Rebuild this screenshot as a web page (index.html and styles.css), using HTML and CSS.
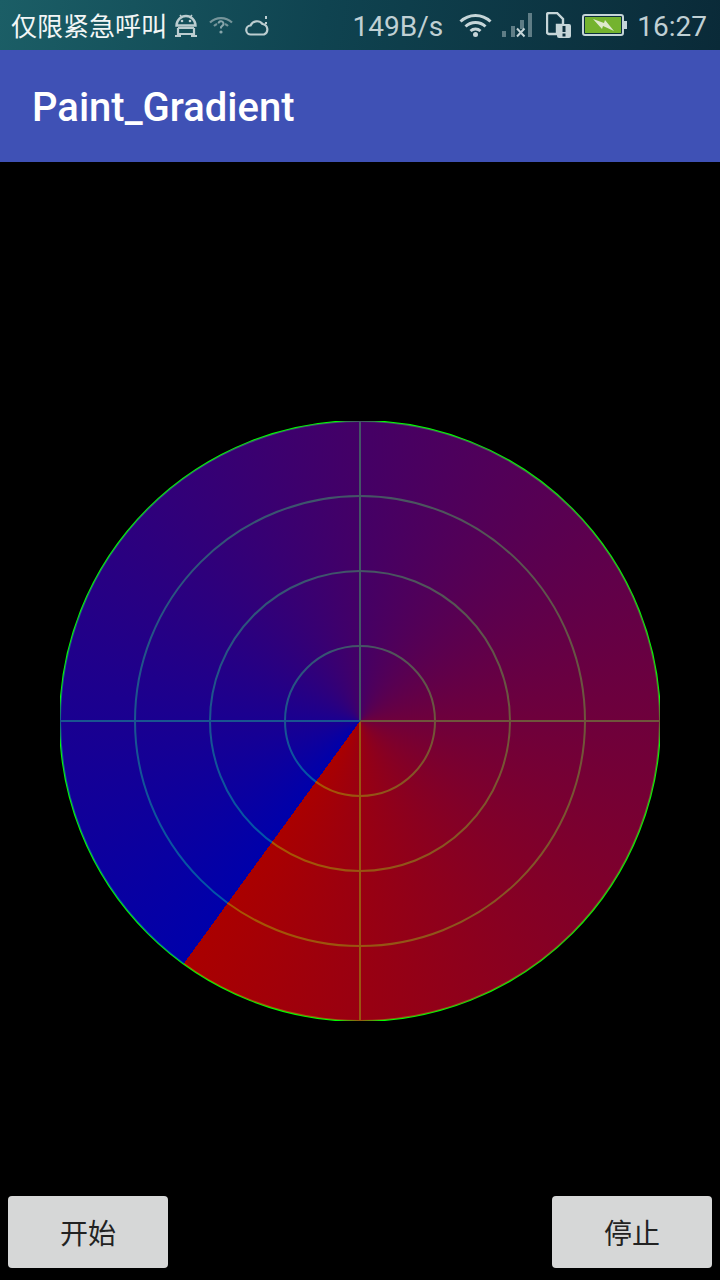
FILE: index.html
```html
<!DOCTYPE html>
<html lang="zh">
<head>
    <meta charset="utf-8">
    <title>Paint_Gradient</title>
    <link rel="stylesheet" href="styles.css">
</head>
<body>
    <div class="status-bar">
        <span class="carrier">仅限紧急呼叫</span>
        <svg class="icon icon-android" width="24" height="23" viewBox="0 0 24 23">
            <path d="M2.500 11.500a9.500 9.500 0 0 1 19 0z" fill="none" stroke="#bccdd0" stroke-width="2.400"/>
            <path d="M6 1l2.500 3M18 1l-2.500 3" stroke="#bccdd0" stroke-width="1.500"/>
            <circle cx="8" cy="7" r="1.300" fill="#bccdd0"/>
            <circle cx="16" cy="7" r="1.300" fill="#bccdd0"/>
            <path d="M4 14h16M4 14v8M20 14v8M1 22h6M17 22h6M4 20h16" fill="none" stroke="#bccdd0" stroke-width="2.200"/>
        </svg>
        <svg class="icon icon-wifi-off" width="24" height="17" viewBox="0 0 24 17">
            <path d="M1 5.500a16 16 0 0 1 22 0M5 9a10 10 0 0 1 3-2M19 9a10 10 0 0 0-3-2" fill="none" stroke="#8fa8ac" stroke-width="2.200"/>
            <path d="M9.500 6.500a2.500 2.500 0 1 1 3.500 2.500l-1 1.200v1.300" fill="none" stroke="#a5bcc0" stroke-width="2"/>
            <circle cx="12" cy="15" r="1.600" fill="#a5bcc0"/>
        </svg>
        <svg class="icon icon-cloud" width="24" height="21" viewBox="0 0 24 21">
            <path d="M6 19.500a4.500 4.500 0 0 1-.5-9 7 7 0 0 1 12-1.500 5.500 5.500 0 0 1 1.500 10.500z" fill="none" stroke="#bccdd0" stroke-width="2.200"/>
            <path d="M21 1v3M21 7v2" stroke="#bccdd0" stroke-width="2"/>
        </svg>
        <span class="spacer"></span>
        <span class="speed">149B/s</span>
        <svg class="icon icon-wifi" width="33" height="24" viewBox="0 0 33 24">
            <path d="M1.500 8.500a21.500 21.500 0 0 1 30 0M6.500 13.500a14.500 14.500 0 0 1 20 0M11.500 18a7.500 7.500 0 0 1 10 0" fill="none" stroke="#c6d5d8" stroke-width="3"/>
            <circle cx="16.500" cy="21.500" r="2.500" fill="#c6d5d8"/>
        </svg>
        <svg class="icon icon-signal" width="30" height="25" viewBox="0 0 30 25">
            <rect x="0" y="18" width="4" height="6" fill="#5f7d86"/>
            <rect x="9" y="13" width="4" height="11" fill="#5f7d86"/>
            <rect x="18" y="7" width="4" height="9" fill="#5f7d86"/>
            <rect x="26" y="0" width="4" height="24" fill="#5f7d86"/>
            <path d="M15 15.500l7.500 8M22.500 15.500l-7.500 8" stroke="#c6d5d8" stroke-width="2"/>
        </svg>
        <svg class="icon icon-sim" width="25" height="26" viewBox="0 0 25 26">
            <path d="M1 3a2 2 0 0 1 2-2h8l6 6v6h-6v9H3a2 2 0 0 1-2-2z" fill="none" stroke="#c6d5d8" stroke-width="2.400"/>
            <rect x="11" y="12" width="14" height="14" rx="2" fill="#c6d5d8"/>
            <rect x="16.500" y="14" width="3" height="6" fill="#0c2f3c"/>
            <rect x="16.500" y="21.500" width="3" height="3" fill="#0c2f3c"/>
        </svg>
        <svg class="icon icon-battery" width="45" height="22" viewBox="0 0 45 22">
            <rect x="1" y="1" width="40" height="20" rx="2" fill="#0c2f3c" stroke="#c6d5d8" stroke-width="2"/>
            <rect x="3" y="3" width="36" height="16" fill="#74b32f"/>
            <rect x="42" y="7" width="3" height="8" fill="#c6d5d8"/>
            <path d="M11 5l11 4 1-3 9 11-11-5-1 3z" fill="#dfe9cf"/>
        </svg>
        <span class="clock">16:27</span>
    </div>

    <div class="app-bar">Paint_Gradient</div>

    <div class="content">
        <!-- green grid under, sweep on top of it. ring gets cut by the square edge -->
        <div class="radar">
            <svg class="radar-grid" width="600" height="600" viewBox="-300 -300 600 600">
                <circle r="300"/>
                <circle r="225"/>
                <circle r="150"/>
                <circle r="75"/>
                <path d="M-300 0H300M0 -300V300"/>
            </svg>
            <div class="radar-sweep"></div>
        </div>
        <div class="buttons">
            <button>开始</button>
            <button>停止</button>
        </div>
    </div>
</body>
</html>
```

FILE: styles.css
```css
html, body {
    margin: 0;
    padding: 0;
}

body {
    width: 720px;
    height: 1280px;
    display: flex;
    flex-direction: column;
    background-color: #000;
    font-family: Roboto, "Noto Sans CJK SC", sans-serif;
    overflow: hidden;
}

.status-bar {
    height: 50px;
    display: flex;
    align-items: center;
    padding: 0 13px 0 11px;
    background: linear-gradient(100deg, #1b5e66 0%, #0f4350 45%, #0a2a38 100%);
    color: #c0d0d4;
    font-size: 28px;
}

.carrier {
    color: #f2f6f6;
    font-family: "Noto Sans CJK SC", sans-serif;
    font-size: 26px;
    line-height: 50px;
}

.speed, .clock {
    margin-top: 2px;
}

.spacer {
    flex: 1;
}

.icon {
    flex: none;
}

.icon-android {
    margin-left: 7px;
    margin-top: 1px;
}

.icon-wifi-off {
    margin-left: 11px;
    margin-top: 1px;
    opacity: .8;
}

.icon-cloud {
    margin-left: 12px;
}

.icon-wifi {
    margin-left: 16px;
    margin-top: -1px;
}

.icon-signal {
    margin-left: 10px;
}

.icon-sim {
    margin-left: 14px;
}

.icon-battery {
    margin-left: 11px;
}

.clock {
    margin-left: 10px;
}

.app-bar {
    height: 112px;
    display: flex;
    align-items: center;
    padding: 3px 0 0 32px;
    box-sizing: border-box;
    background-color: #3f51b5;
    color: #fff;
    font-size: 40px;
    font-weight: 500;
}

.content {
    flex: 1;
    display: grid;
}

.radar {
    grid-area: 1 / 1;
    place-self: center;
    display: grid;
    place-items: center;
}

.radar-grid {
    grid-area: 1 / 1;
    overflow: hidden;
    fill: none;
    stroke: #0f0;
    stroke-width: 2;
}

.radar-sweep {
    grid-area: 1 / 1;
    width: 600px;
    height: 600px;
    border-radius: 50%;
    background: conic-gradient(from 216deg, rgba(0, 0, 255, .667), rgba(255, 0, 0, .667));
}

.buttons {
    grid-area: 1 / 1;
    align-self: end;
    display: flex;
    justify-content: space-between;
    padding: 0 8px 12px;
}

button {
    width: 160px;
    height: 72px;
    padding: 0;
    border: none;
    border-radius: 4px;
    background-color: #d6d7d7;
    color: #222;
    font-family: "Noto Sans CJK SC", sans-serif;
    font-size: 28px;
}
```
